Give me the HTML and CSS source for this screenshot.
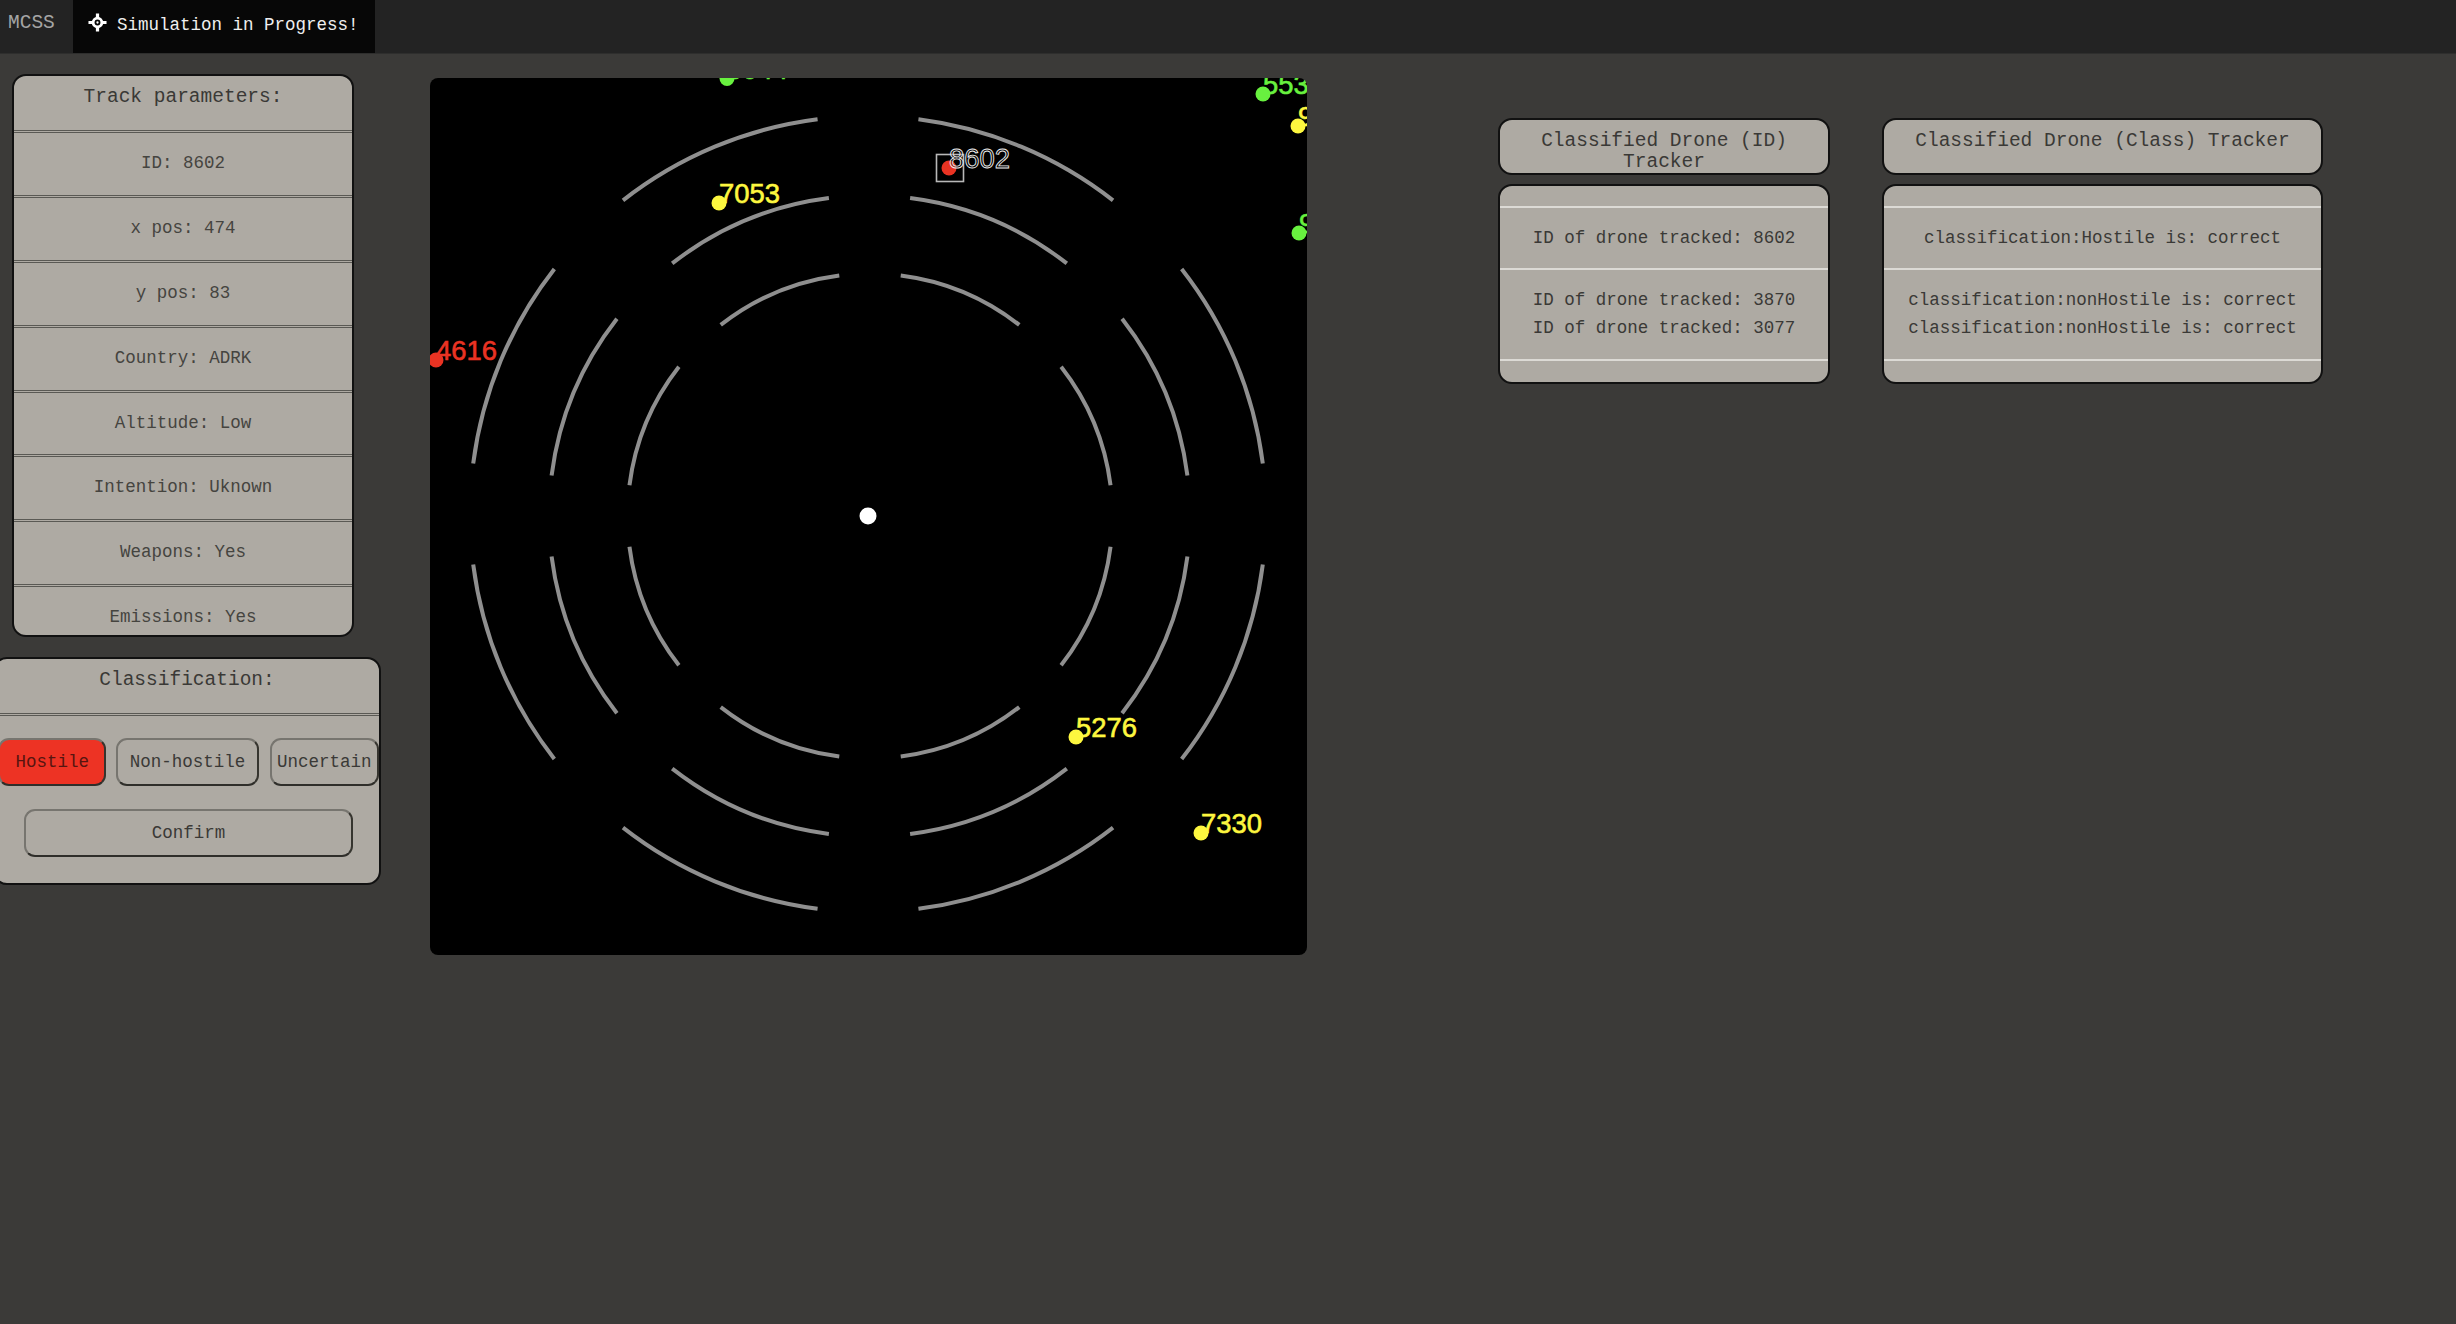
FILE: index.html
```html
<!DOCTYPE html>
<html lang="en">
<head>
	<meta charset="UTF-8">
	<title>MCSS</title>
	<link rel="stylesheet" href="styles.css">
</head>
<body>
	<div class="topbar">
		<span class="brand">MCSS</span>
		<span class="tab">
			<svg class="tab-icon" viewBox="0 0 20 20">
				<circle cx="10" cy="10" r="4.6" fill="none" stroke="#fff" stroke-width="3"/>
				<path d="M10 0.5V6M10 14V19.5M0.5 10H6M14 10H19.5" stroke="#fff" stroke-width="3.4"/>
				<circle cx="10" cy="10" r="1.2" fill="#fff"/>
			</svg>
			Simulation in Progress!
		</span>
	</div>

	<div class="main">
		<div class="left-col">
			<div class="panel track">
				<div class="panel-title">Track parameters:</div>
				<div class="param">ID: 8602</div>
				<div class="param">x pos: 474</div>
				<div class="param">y pos: 83</div>
				<div class="param">Country: ADRK</div>
				<div class="param">Altitude: Low</div>
				<div class="param">Intention: Uknown</div>
				<div class="param">Weapons: Yes</div>
				<div class="param">Emissions: Yes</div>
			</div>

			<div class="panel classify">
				<div class="panel-title">Classification:</div>
				<div class="choices">
					<button class="btn btn-hostile">Hostile</button>
					<button class="btn btn-non">Non-hostile</button>
					<button class="btn btn-uncertain">Uncertain</button>
				</div>
				<button class="btn btn-confirm">Confirm</button>
			</div>
		</div>

		<div class="radar">
			<svg viewBox="0 0 877 877" width="877" height="877">
				<circle class="ring" cx="438" cy="436" r="398" pathLength="360"/>
				<circle class="ring" cx="439.5" cy="438" r="320.5" pathLength="360"/>
				<circle class="ring" cx="440" cy="438" r="242.5" pathLength="360"/>
				<circle cx="438" cy="438" r="8.5" fill="#fff"/>

				<circle class="green" cx="297" cy="0.5" r="7.5"/>
				<text class="label green" x="297" y="1">5044</text>
				<circle class="green" cx="833" cy="16" r="7.5"/>
				<text class="label green" x="833" y="16">5534</text>
				<circle class="yellow" cx="868" cy="48" r="7.5"/>
				<text class="label yellow" x="868" y="48">9120</text>
				<circle class="green" cx="869" cy="155" r="7.5"/>
				<text class="label green" x="869" y="155">9345</text>
				<circle class="yellow" cx="289" cy="125" r="7.5"/>
				<text class="label yellow" x="289" y="125">7053</text>
				<circle class="red" cx="6" cy="282" r="7.5"/>
				<text class="label red" x="6" y="282">4616</text>
				<circle class="yellow" cx="646" cy="659" r="7.5"/>
				<text class="label yellow" x="646" y="659">5276</text>
				<circle class="yellow" cx="771" cy="755" r="7.5"/>
				<text class="label yellow" x="771" y="755">7330</text>

				<rect class="selected" x="506.5" y="76.5" width="27" height="27"/>
				<circle class="red" cx="519" cy="90" r="7.5"/>
				<text class="label picked" x="519" y="90">8602</text>
			</svg>
		</div>

		<div class="tracker tracker-id">
			<div class="panel tracker-head">Classified Drone (ID) Tracker</div>
			<div class="panel tracker-body">
				<div class="log-row">ID of drone tracked: 8602</div>
				<div class="log-row log-row-wide">ID of drone tracked: 3870<br>ID of drone tracked: 3077</div>
				<div class="log-end"></div>
			</div>
		</div>

		<div class="tracker tracker-class">
			<div class="panel tracker-head">Classified Drone (Class) Tracker</div>
			<div class="panel tracker-body">
				<div class="log-row">classification:Hostile is: correct</div>
				<div class="log-row log-row-wide">classification:nonHostile is: correct<br>classification:nonHostile is: correct</div>
				<div class="log-end"></div>
			</div>
		</div>
	</div>
</body>
</html>
```

FILE: styles.css
```css
*{
	box-sizing: border-box;
}
html,body{
	margin: 0;
	padding: 0;
	height: 100%;
	overflow: hidden;
}
body{
	background: #3b3a38;
	font-family: "Liberation Mono", monospace;
	font-size: 17.5px;
	color: #3a3936;
}
.topbar{
	display: flex;
	height: 54px;
	background: #232323;
	border-bottom: 1px solid #2e2e2d;
}
.brand{
	width: 73px;
	padding: 11px 0 0 8px;
	font-size: 19.5px;
	line-height: 24px;
	color: #a5a5a5;
}
.tab{
	display: flex;
	align-items: flex-start;
	gap: 10px;
	width: 302px;
	padding: 13px 0 0 15px;
	background: #070707;
	color: #efefef;
	line-height: 24px;
}
.tab-icon{
	width: 19px;
	height: 19px;
}
.main{
	display: flex;
	align-items: flex-start;
}
.left-col{
	flex: none;
	width: 430px;
	padding: 20px 0 0 12px;
}
.panel{
	background: #aeaaa3;
	border: 2px solid #111;
	border-radius: 14px;
}
.panel-title{
	height: 54px;
	padding-top: 10px;
	line-height: 22px;
	font-size: 19.5px;
	text-align: center;
}
.track{
	width: 342px;
	height: 563px;
	overflow: hidden;
}
.param{
	display: flex;
	align-items: center;
	justify-content: center;
	height: 64.9px;
	padding-bottom: 2px;
	border-top: 3px double #5a5954;
	color: #45443f;
}
.classify{
	width: 388px;
	height: 228px;
	margin: 20px 0 0 -19px;
}
.classify .panel-title{
	border-bottom: 3px double #5a5954;
	height: 57px;
}
.choices{
	display: flex;
	gap: 10px;
	padding: 22px 0 0 3px;
}
.btn{
	display: block;
	height: 48px;
	padding: 0;
	background: #aeaaa3;
	border: 2px solid;
	border-color: #77756f #36352f #2f2e2a #77756f;
	border-radius: 11px;
	font-family: "Liberation Mono", monospace;
	font-size: 17.5px;
	color: #3a3936;
}
.btn-hostile{
	width: 109px;
	background: #ed3324;
	color: #571510;
}
.btn-non{
	width: 143px;
}
.btn-uncertain{
	width: 110px;
	margin-left: 1px;
}
.btn-confirm{
	width: 329px;
	margin: 23px 0 0 29px;
}
.radar{
	flex: none;
	width: 877px;
	height: 877px;
	margin-top: 24px;
	background: #000;
	border-radius: 8px;
	overflow: hidden;
}
.radar svg{
	display: block;
}
.ring{
	fill: none;
	stroke: #8f8f8f;
	stroke-width: 4;
	stroke-dasharray: 30.7 14 30.7 14.6;
	stroke-dashoffset: -7.3;
}
circle.green{
	fill: #68f13f;
}
circle.yellow{
	fill: #fdf73f;
}
circle.red{
	fill: #ea3323;
}
.label{
	font-family: "Liberation Sans", sans-serif;
	font-size: 27.4px;
	stroke-width: 0.6;
}
.label.green{
	fill: #68f13f;
	stroke: #68f13f;
}
.label.yellow{
	fill: #fdf73f;
	stroke: #fdf73f;
}
.label.red{
	fill: #ea3323;
	stroke: #ea3323;
}
.label.picked{
	fill: #000;
	fill-opacity: 0.35;
	stroke: #ededed;
	stroke-width: 0.9;
}
.selected{
	fill: none;
	stroke: #b8b8b8;
	stroke-width: 1.6;
}
.tracker{
	flex: none;
	margin-top: 64px;
}
.tracker-id{
	width: 332px;
	margin-left: 191px;
}
.tracker-class{
	width: 441px;
	margin-left: 52px;
}
.tracker-head{
	height: 57px;
	padding: 11px 8px 0;
	font-size: 19.5px;
	line-height: 21.3px;
	text-align: center;
}
.tracker-body{
	height: 200px;
	margin-top: 9px;
	padding-top: 20px;
	overflow: hidden;
}
.log-row{
	padding: 16px 0;
	border-top: 2px solid #dcdad5;
	line-height: 28px;
	text-align: center;
}
.log-row-wide{
	padding-bottom: 17px;
}
.log-end{
	border-top: 2px solid #dcdad5;
}
```
